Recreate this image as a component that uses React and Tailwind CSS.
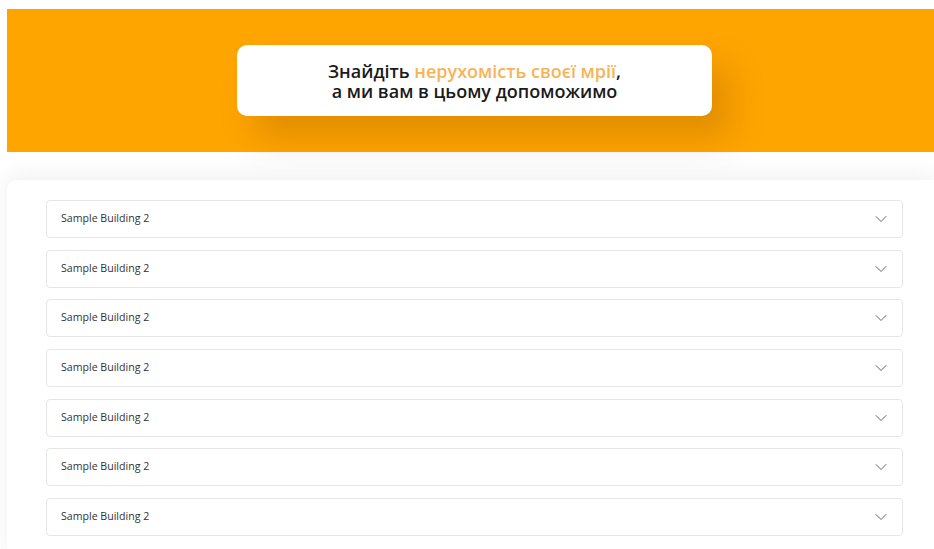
import { ChevronDown } from "lucide-react"

const buildings = Array.from({ length: 7 }, (_, i) => ({
  id: i,
  name: "Sample Building 2",
}))

function BuildingRow({ name }) {
  return (
    <div className="flex h-[38px] items-center justify-between rounded-[4px] border border-[#e6e6e6] bg-white pl-[14px] pr-[11px]">
      <span className="text-[10.6px] text-[#333]">{name}</span>
      <ChevronDown size={20} strokeWidth={1.1} className="text-[#555]" />
    </div>
  )
}

export default function App() {
  return (
    <div
      className="min-h-[549px] overflow-hidden bg-white pl-[7px] pt-[9px]"
      style={{ fontFamily: '"Open Sans", "Noto Sans", sans-serif' }}
    >
      <div className="flex h-[143px] items-start justify-center bg-[#ffa500] pt-[36px]">
        <div className="ml-[8px] flex h-[71px] w-[475px] flex-col items-center justify-center rounded-[10px] bg-white shadow-[18px_22px_34px_rgba(120,60,0,0.22)]">
          <p className="text-center text-[18px] font-semibold leading-[20px] text-[#1a1a1a]">
            Знайдіть <span className="text-[#f7b456]">нерухомість своєї мрії</span>,
            <br />
            а ми вам в цьому допоможимо
          </p>
        </div>
      </div>

      <div className="mt-[28px] rounded-tl-[10px] bg-white pb-6 pl-[39px] pr-[31px] pt-[20px] shadow-[0_-6px_22px_rgba(0,0,0,0.06)]">
        <div className="flex flex-col gap-[11.7px]">
          {buildings.map(b => (
            <BuildingRow key={b.id} name={b.name} />
          ))}
        </div>
      </div>
    </div>
  )
}
